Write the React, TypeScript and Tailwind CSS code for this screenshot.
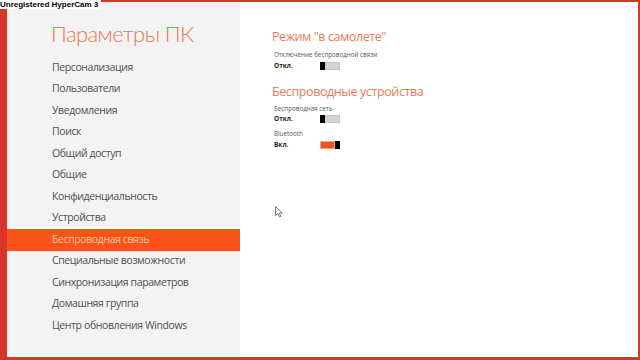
const menu = [
  'Персонализация',
  'Пользователи',
  'Уведомления',
  'Поиск',
  'Общий доступ',
  'Общие',
  'Конфиденциальность',
  'Устройства',
  'Беспроводная связь',
  'Специальные возможности',
  'Синхронизация параметров',
  'Домашняя группа',
  'Центр обновления Windows',
];

const ACTIVE = 'Беспроводная связь';

function Toggle({ on }: { on: boolean }) {
  if (on) {
    return (
      <div className="flex w-[20px] h-[8px]">
        <div className="flex-1 bg-[#f4511e] border border-[#f8a080]" />
        <div className="w-[5px] bg-black" />
      </div>
    );
  }
  return (
    <div className="flex w-[20px] h-[8px]">
      <div className="w-[5px] bg-black" />
      <div className="flex-1 bg-[#d4d4d4] border border-[#c4c4c4]" />
    </div>
  );
}

function Setting({ label, value, on, top }: { label: string; value: string; on: boolean; top: string }) {
  return (
    <>
      <div className={`${top} ml-[2px] h-[10px] leading-[10px] text-[6.25px] text-[#555]`}>{label}</div>
      <div className="mt-[1.5px] ml-[2px] flex items-center h-[8px]">
        <span className="w-[46px] text-[6.5px] font-bold text-[#222] leading-[8px]">{value}</span>
        <Toggle on={on} />
      </div>
    </>
  );
}

export default function App() {
  return (
    <div
      className="relative w-[640px] h-[360px] bg-[#d8352a] pl-[7px] pr-[2px] pt-[2px] pb-[3px]"
      style={{ fontFamily: '"Open Sans", "Noto Sans", sans-serif' }}
    >
      <div className="flex h-full bg-white">
        <aside className="w-[233px] bg-[#f3f3f3] flex flex-col">
          <h1
            className="h-[55px] pl-[44px] pt-[21px] text-[22px] leading-[22px] font-light text-[#ec7650] tracking-[-0.6px]"
            style={{ fontFamily: 'Lato, "Open Sans", sans-serif' }}
          >
            Параметры ПК
          </h1>
          <nav className="flex flex-col">
            {menu.map((item) => (
              <div
                key={item}
                className={
                  item === ACTIVE
                    ? 'h-[21.5px] pl-[45px] flex items-center text-[10.5px] tracking-[-0.4px] bg-[#fb5418] text-[#fcc0a8]'
                    : 'h-[21.5px] pl-[45px] flex items-center text-[10.5px] tracking-[-0.4px] text-[#505050]'
                }
              >
                {item}
              </div>
            ))}
          </nav>
        </aside>
        <main className="flex-1 flex flex-col pl-[32px]">
          <h2 className="mt-[27px] h-[16px] leading-[16px] text-[12.5px] text-[#ec7a55] tracking-[-0.4px]">
            Режим "в самолете"
          </h2>
          <Setting top="mt-[5px]" label="Отключение беспроводной связи" value="Откл." on={false} />
          <h2 className="mt-[14px] h-[16px] leading-[16px] text-[12.5px] text-[#ec7a55] tracking-[-0.4px]">
            Беспроводные устройства
          </h2>
          <Setting top="mt-[4px]" label="Беспроводная сеть" value="Откл." on={false} />
          <Setting top="mt-[6px]" label="Bluetooth" value="Вкл." on={true} />
        </main>
      </div>
      <div
        className="absolute left-0 top-0 h-[9px] pr-[3px] bg-white text-[8px] leading-[9px] font-bold text-black"
        style={{ fontFamily: '"Liberation Sans", Arial, sans-serif' }}
      >
        Unregistered HyperCam 3
      </div>
      <svg className="absolute left-[275px] top-[206px]" width="8" height="12" viewBox="0 0 8 12">
        <path d="M0.5 0.5 L0.5 9.5 L2.8 7.6 L4.4 11 L5.8 10.4 L4.3 7.2 L7.2 7.2 Z" fill="#fff" stroke="#555" strokeWidth="0.8" />
      </svg>
    </div>
  );
}
